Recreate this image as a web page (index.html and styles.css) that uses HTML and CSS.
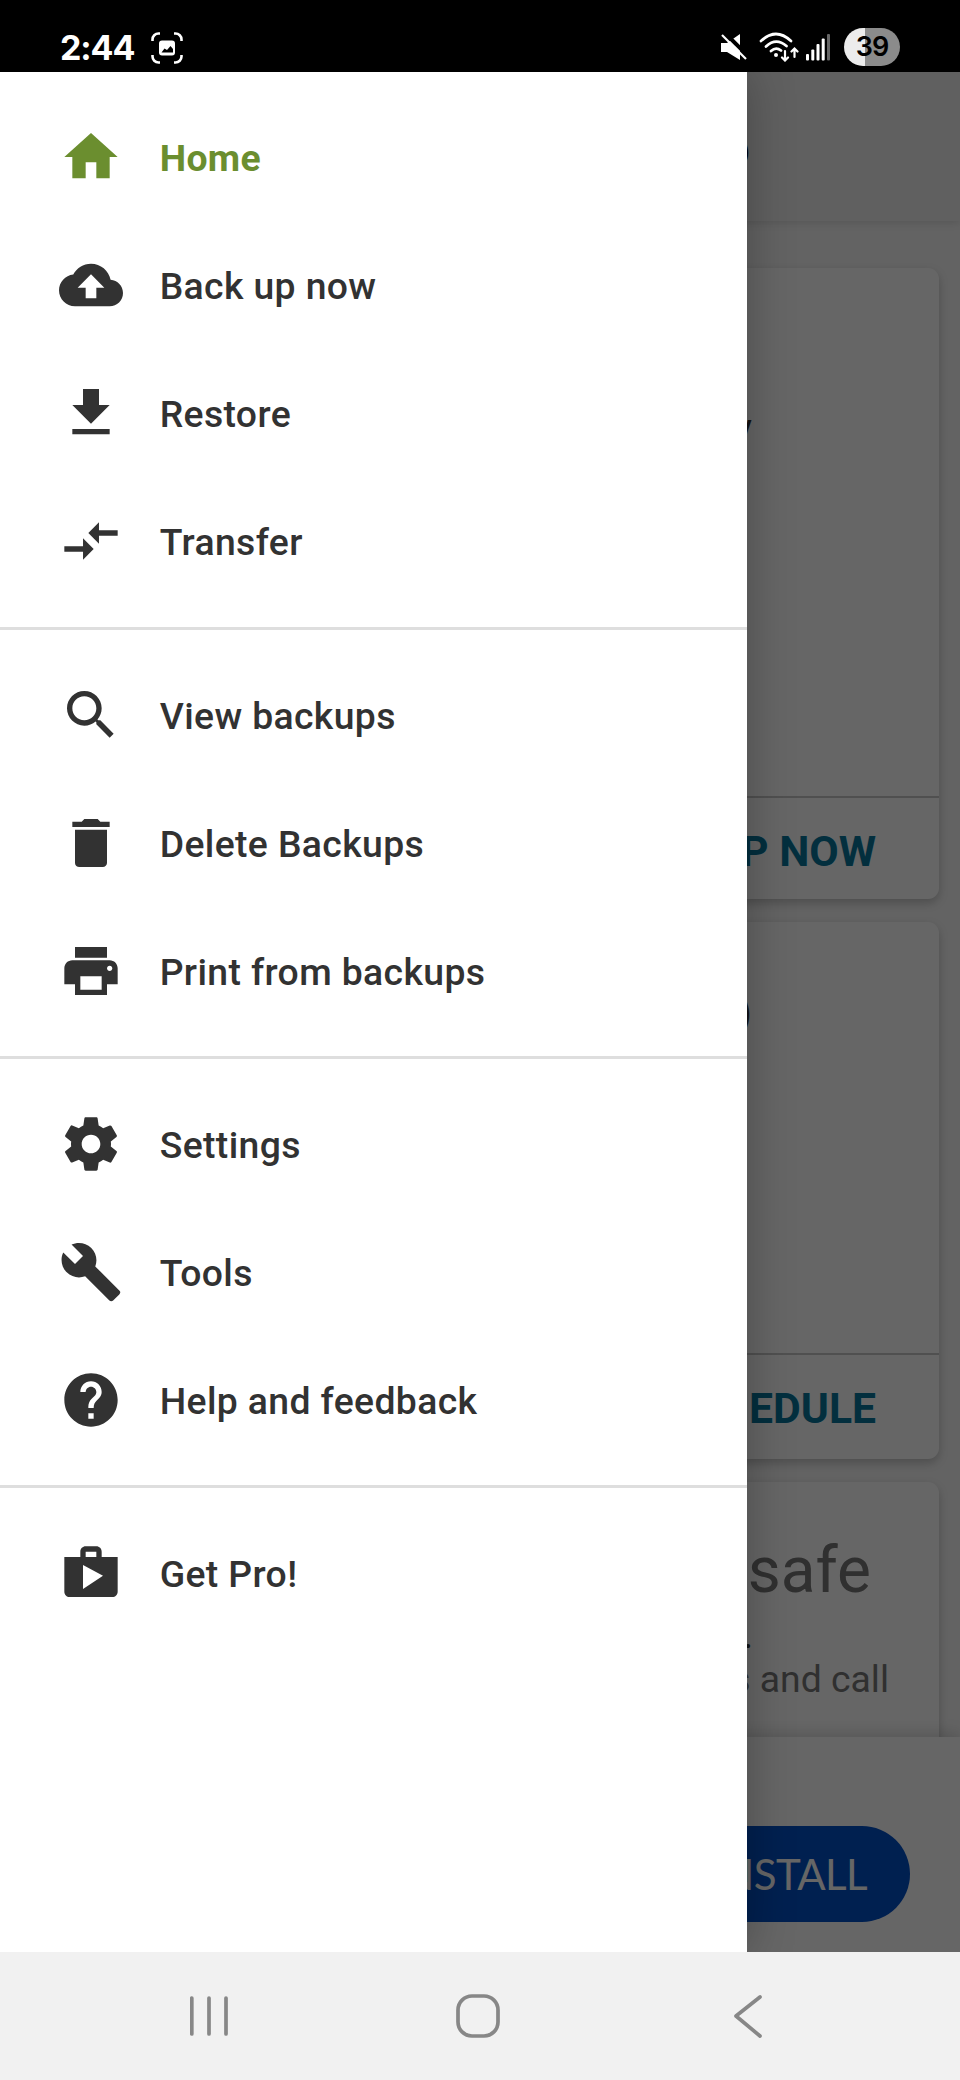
FILE: index.html
```
<!DOCTYPE html>
<html lang="en">
<head>
<meta charset="utf-8">
<title>Backup menu</title>
<link rel="stylesheet" href="styles.css">
</head>
<body>
<div class="phone">
  <header class="status">
    <div class="status-left">
      <span class="clock">2:44</span>
      <svg class="shot" viewBox="0 0 32 32"><path d="M1.500 9V7.500a6 6 0 0 1 6-6H9M23 1.500h1.500a6 6 0 0 1 6 6V9M30.500 23v1.500a6 6 0 0 1-6 6H23M9 30.500H7.500a6 6 0 0 1-6-6V23" fill="none" stroke="#fff" stroke-width="2.600"/><rect x="8" y="8.500" width="16" height="15" rx="3" fill="#fff"/><path d="M10.500 20.500l3-4 2.500 1.500 3.500-4 2.500 3v3.500z" fill="#000"/></svg>
    </div>
    <div class="status-right">
      <svg class="mute" viewBox="0 0 28 28"><path d="M1 10h6L20 1v26L7 19H1z" fill="#fff"/><path d="M4 -1L30 25" stroke="#000" stroke-width="4"/><path d="M2 2L26 26" stroke="#fff" stroke-width="2.200"/></svg>
      <svg class="wifi" viewBox="0 0 40 30"><g fill="none" stroke="#fff" stroke-width="2.700" stroke-linecap="round"><path d="M2 9Q17 -5 32 9M7 14.500Q17 5 27.500 14M12 19Q17 14.500 22 18.500"/><path d="M26 19v9M23 25.500l3 3 3-3M35.500 25v-8M32.500 19.500l3-3 3 3" stroke-width="2.200"/></g><circle cx="17" cy="23" r="2" fill="#fff"/></svg>
      <svg class="signal" viewBox="0 0 24 27"><g fill="#fff"><rect x="0" y="20" width="3" height="6.500" rx="1"/><rect x="5.300" y="15.500" width="3" height="11" rx="1"/><rect x="10.500" y="10" width="3" height="16.500" rx="1"/><rect x="15.700" y="4.500" width="3" height="22" rx="1"/></g><rect x="21" y="0" width="3" height="26.500" rx="1" fill="#666"/></svg>
      <span class="battery">39</span>
    </div>
  </header>

  <div class="screen">
    <main class="app">
      <div class="appbar"><span>p</span></div>
      <div class="cards">
        <section class="card first"><div class="card-body"><span class="frag-y">y</span></div><div class="card-action">BACK UP NOW</div></section>
        <section class="card second"><div class="card-body"><span class="frag-p">)</span></div><div class="card-action">SCHEDULE</div></section>
        <section class="card third"><h2>safe</h2><p class="lead">.</p><p>messages and call</p></section>
      </div>
      <footer class="ad"><div class="install">INSTALL</div></footer>
    </main>
    <div class="scrim"></div>
    <nav class="drawer">
      <ul>
        <li class="active"><svg viewBox="0 0 24 24"><path d="M10 20v-6h4v6h5v-8h3L12 3 2 12h3v8z"/></svg><span>Home</span></li>
        <li><svg viewBox="0 0 24 24"><path d="M19.350 10.040C18.670 6.590 15.640 4 12 4 9.110 4 6.600 5.640 5.350 8.040 2.340 8.360 0 10.910 0 14c0 3.310 2.690 6 6 6h13c2.760 0 5-2.240 5-5 0-2.640-2.050-4.780-4.650-4.960zM14 13v4h-4v-4H7l5-5 5 5h-3z"/></svg><span>Back up now</span></li>
        <li><svg viewBox="0 0 24 24"><path d="M19 9h-4V3H9v6H5l7 7 7-7zM5 18v2h14v-2H5z"/></svg><span>Restore</span></li>
        <li><svg viewBox="0 0 24 24"><path d="M9.010 14H2v2h7.010v3L13 15l-3.990-4v3zm5.980-1v-3H22V8h-7.010V5L11 9l3.990 4z"/></svg><span>Transfer</span></li>
      </ul>
      <ul>
        <li><svg viewBox="0 0 24 24"><path d="M15.500 14h-.79l-.28-.27C15.410 12.590 16 11.110 16 9.500 16 5.910 13.090 3 9.500 3S3 5.910 3 9.500 5.910 16 9.500 16c1.610 0 3.090-.59 4.230-1.570l.27.28v.79l5 4.990L20.490 19l-4.990-5zm-6 0C7.010 14 5 11.990 5 9.500S7.010 5 9.500 5 14 7.010 14 9.500 11.990 14 9.500 14z"/></svg><span>View backups</span></li>
        <li><svg viewBox="0 0 24 24"><path d="M6 19.500C6 20.400 6.800 21 7.600 21h8.800c.9 0 1.600-.7 1.600-1.500V7H6zM19 4h-3.500l-1-1h-5l-1 1H5v2h14z"/></svg><span>Delete Backups</span></li>
        <li><svg viewBox="0 0 24 24"><path d="M19 8H5c-1.660 0-3 1.340-3 3v6h4v4h12v-4h4v-6c0-1.660-1.340-3-3-3zm-3 11H8v-5h8v5zm3-7c-.55 0-1-.45-1-1s.45-1 1-1 1 .45 1 1-.45 1-1 1zm-1-9H6v4h12V3z"/></svg><span>Print from backups</span></li>
      </ul>
      <ul>
        <li><svg viewBox="0 0 24 24"><path d="M19.430 12.980c.04-.32.07-.64.07-.98s-.03-.66-.07-.98l2.110-1.650c.19-.15.24-.42.12-.64l-2-3.460c-.12-.22-.39-.3-.61-.22l-2.490 1c-.52-.4-1.080-.73-1.690-.98l-.38-2.650C14.460 2.180 14.250 2 14 2h-4c-.25 0-.46.18-.49.42l-.38 2.650c-.61.25-1.170.59-1.690.98l-2.490-1c-.23-.09-.49 0-.61.22l-2 3.460c-.13.22-.07.49.12.64l2.110 1.650c-.04.32-.07.65-.07.98s.03.66.07.98l-2.110 1.650c-.19.15-.24.42-.12.64l2 3.460c.12.22.39.3.61.22l2.490-1c.52.4 1.080.73 1.690.98l.38 2.650c.03.24.24.42.49.42h4c.25 0 .46-.18.49-.42l.38-2.650c.61-.25 1.170-.59 1.690-.98l2.490 1c.23.09.49 0 .61-.22l2-3.460c.12-.22.07-.49-.12-.64l-2.110-1.650zM12 15.500c-1.930 0-3.500-1.570-3.500-3.500s1.570-3.500 3.500-3.500 3.500 1.570 3.500 3.500-1.570 3.500-3.500 3.500z"/></svg><span>Settings</span></li>
        <li><svg viewBox="0 0 24 24"><path d="M22.700 19l-9.100-9.100c.9-2.300.4-5-1.500-6.900-2-2-5-2.400-7.400-1.300L9 6 6 9 1.600 4.700C.4 7.100.9 10.100 2.900 12.100c1.900 1.900 4.600 2.400 6.900 1.500l9.100 9.100c.4.4 1 .4 1.400 0l2.300-2.300c.5-.4.5-1.100.1-1.400z"/></svg><span>Tools</span></li>
        <li><svg viewBox="0 0 24 24"><path d="M12 2C6.480 2 2 6.480 2 12s4.480 10 10 10 10-4.480 10-10S17.520 2 12 2zm1 17h-2v-2h2v2zm2.070-7.750l-.9.920C13.450 12.900 13 13.500 13 15h-2v-.5c0-1.100.45-2.100 1.170-2.830l1.240-1.260c.37-.36.59-.86.59-1.410 0-1.100-.9-2-2-2s-2 .9-2 2H8c0-2.210 1.790-4 4-4s4 1.790 4 4c0 .88-.36 1.680-.93 2.250z"/></svg><span>Help and feedback</span></li>
      </ul>
      <ul>
        <li><svg viewBox="0 0 24 24"><path d="M16 6V4c0-1.110-.89-2-2-2h-4c-1.110 0-2 .89-2 2v2H2v13c0 1.110.89 2 2 2h16c1.110 0 2-.89 2-2V6h-6zm-6-2h4v2h-4V4zM9 18V9l7.500 4L9 18z"/></svg><span>Get Pro!</span></li>
      </ul>
    </nav>
  </div>

  <footer class="navbar">
    <svg viewBox="0 0 40 50"><path d="M1.800 7v36M19 7v36M36 7v36" /></svg>
    <svg viewBox="0 0 50 50"><rect x="5" y="5" width="40" height="40" rx="14"/></svg>
    <svg viewBox="0 0 50 50"><path d="M37 6L13 25l24 20"/></svg>
  </footer>
</div>
</body>
</html>
```
FILE: styles.css
```
* { box-sizing: border-box; }
body { margin: 0; font-family: Roboto, "Liberation Sans", sans-serif; }
.phone { width: 960px; height: 2080px; display: flex; flex-direction: column; overflow: hidden; }

.status { height: 72px; background: #000; color: #fff; display: flex; justify-content: space-between; padding: 28px 60px 0 60px; }
.status-left, .status-right { display: flex; align-items: flex-start; }
.clock { font: 700 34px/39px Inter, sans-serif; letter-spacing: -1.1px; width: 75px; white-space: nowrap; }
.shot { width: 32px; height: 32px; margin: 4px 0 0 16px; }
.mute { width: 28px; height: 28px; margin: 5px 11px 0 0; }
.wifi { width: 40px; height: 30px; margin: 4px 7px 0 0; }
.signal { width: 24px; height: 27px; margin: 6px 14px 0 0; }
.battery { width: 56px; height: 38px; border-radius: 19px; background: linear-gradient(90deg, #ececec 38%, #8b8b8b 38%); color: #000; font: 600 27px/37px Inter, sans-serif; text-align: center; letter-spacing: -1px; }

.screen { height: 1880px; position: relative; overflow: hidden; }
.app { height: 1880px; background: #f7f7f7; display: flex; flex-direction: column; }
.appbar { height: 149px; flex: none; background: #f1f1f1; box-shadow: 0 2px 8px rgba(0,0,0,.12); padding: 52px 210px 0 0; text-align: right; font: 500 48px/52px Roboto, sans-serif; }
.cards { flex: 1; min-height: 0; overflow: hidden; padding: 47px 21px 0; display: flex; flex-direction: column; gap: 23px; }
.card { flex: none; background: #fff; border-radius: 11px; box-shadow: 0 4px 10px rgba(0,0,0,.22); display: flex; flex-direction: column; }
.first { height: 631px; }
.second { height: 537px; }
.third { height: 400px; padding: 53px 50px 0 0; color: #787878; text-align: right; }
.card-body { flex: 1; text-align: right; color: #333; }
.card-action { border-top: 2px solid #c8c8c8; height: 103px; padding: 29px 63px 0 0; text-align: right; color: #08769c; font-size: 42.667px; line-height: 48px; font-weight: 700; }
.second .card-action { height: 106px; }
.frag-y { display: block; margin: 137px 187px 0 0; font-size: 37.333px; line-height: 44px; }
.frag-p { display: block; margin: 69px 187px 0 0; font-size: 42px; line-height: 44px; }
.third h2 { margin: 0 18px 0 0; font-size: 64px; line-height: 72px; font-weight: 400; }
.third p { margin: 0; font-size: 37.333px; line-height: 44px; }
.third .lead { margin-top: 6px; padding-right: 136px; color: #333; }
.ad { height: 215px; flex: none; position: relative; background: #fff; box-shadow: 0 -4px 14px rgba(0,0,0,.15); display: flex; justify-content: flex-end; padding: 89px 50px 0 0; }
.install { width: 290px; height: 96px; border-radius: 48px; background: #0050c8; color: #fff; text-align: right; padding-right: 43px; font: 400 42px/96px Lato, sans-serif; letter-spacing: -.6px; }
.scrim { position: absolute; inset: 0; background: rgba(0,0,0,.6); }

.drawer { position: absolute; left: 0; top: 0; bottom: 0; width: 747px; background: #fff; box-shadow: 0 0 44px rgba(0,0,0,.28); }
.drawer ul { list-style: none; margin: 0; padding: 21.333px 0; }
.drawer ul + ul { border-top: 3px solid #dedede; padding-top: 21px; }
.drawer li { height: 128px; display: flex; align-items: center; gap: 37px; padding: 0 59px; color: #323232; font-size: 37.333px; font-weight: 500; letter-spacing: .38px; }
.drawer svg { width: 64px; height: 64px; fill: currentColor; flex: none; }
.drawer li { padding-left: 58.667px; }
.drawer span { line-height: 44px; padding-top: 2px; }
.drawer .active { color: #6b8e2f; font-weight: 700; }

.navbar { height: 128px; background: #f1f1f1; display: flex; align-items: center; padding: 0 187px 0 190px; justify-content: space-between; }
.navbar svg { height: 50px; fill: none; stroke: #878787; stroke-width: 3.700; stroke-linecap: round; stroke-linejoin: round; }
.navbar svg:nth-child(2) { margin-left: 2px; }
```
